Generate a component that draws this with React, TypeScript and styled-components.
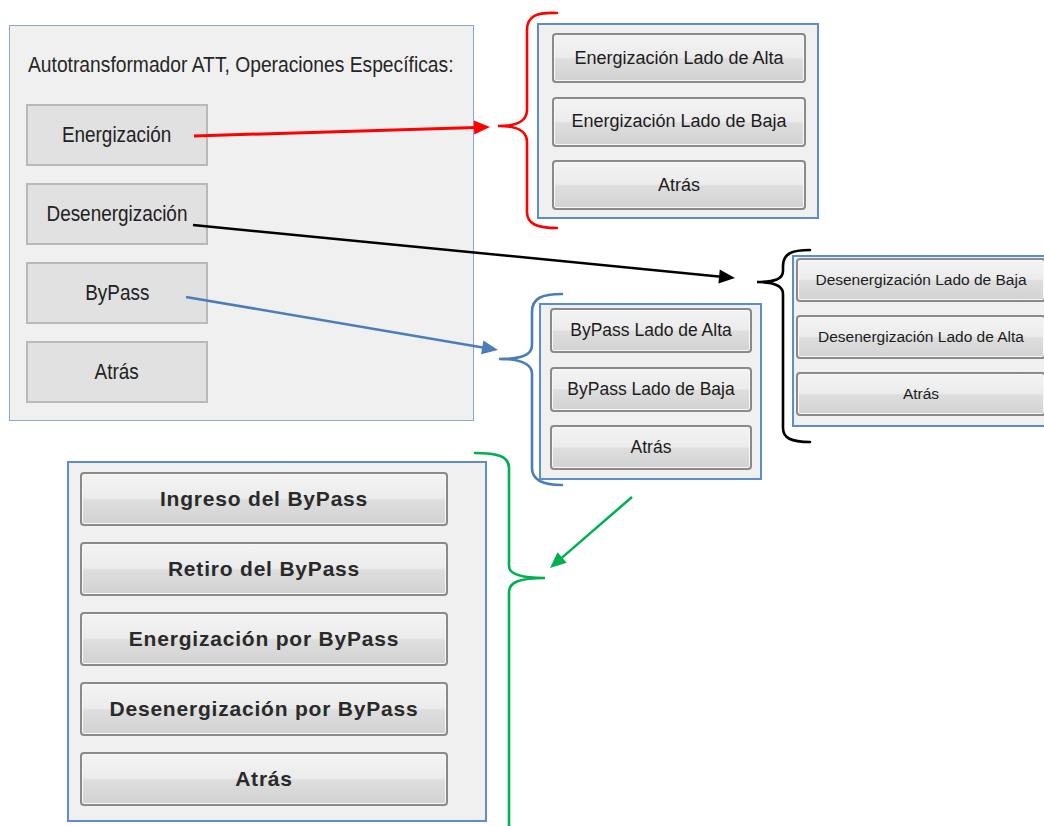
import React from 'react';
import styled, { createGlobalStyle } from 'styled-components';

const GlobalStyle = createGlobalStyle`
  html, body {
    margin: 0;
    padding: 0;
    background: #ffffff;
    overflow: hidden;
  }
`;

const Canvas = styled.div`
  position: relative;
  width: 1044px;
  height: 826px;
  overflow: hidden;
  background: #ffffff;
  font-family: 'Liberation Sans', Arial, sans-serif;
`;

// windows on the diagram canvas: their place is the content
const Window = styled.div<{ $x: number; $y: number; $w: number; $h: number }>`
  position: absolute;
  left: ${({ $x }) => $x}px;
  top: ${({ $y }) => $y}px;
  width: ${({ $w }) => $w}px;
  height: ${({ $h }) => $h}px;
  box-sizing: border-box;
  background: #f0f0f0;
  display: flex;
  flex-direction: column;
`;

const MainWindow = styled(Window)`
  border: 1px solid #8aa6cc;
  padding: 26px 0 0 16px;
`;

const SubWindow = styled(Window)<{ $pad: string; $gap: number }>`
  border: 2px solid #5f8dcb;
  padding: ${({ $pad }) => $pad};
  gap: ${({ $gap }) => $gap}px;
`;

// the old form uses a narrow face; no narrow font is installed, so squeeze it
const Narrow = styled.span<{ $origin?: string; $scale?: number }>`
  display: inline-block;
  white-space: nowrap;
  transform: scaleX(${({ $scale }) => $scale || 0.86});
  transform-origin: ${({ $origin }) => $origin || 'center'};
`;

const Title = styled.div`
  font-size: 22px;
  line-height: 26px;
  color: #262626;
  margin: 0 0 26px 2px;
  white-space: nowrap;
`;

const FlatList = styled.div`
  display: flex;
  flex-direction: column;
  gap: 17px;
`;

const FlatButton = styled.div`
  width: 182px;
  height: 62px;
  box-sizing: border-box;
  border: 2px solid #b9b9b9;
  background: #e1e1e1;
  display: flex;
  align-items: center;
  justify-content: center;
  font-size: 22px;
  color: #222222;
`;

const GlossButton = styled.div<{ $w: number; $h: number; $size: number; $bold?: boolean }>`
  flex: none;
  width: ${({ $w }) => $w}px;
  height: ${({ $h }) => $h}px;
  box-sizing: border-box;
  border: 2px solid #8a8a8a;
  border-radius: 4px;
  background: linear-gradient(#f3f3f3 0%, #ececec 48%, #dedede 52%, #d2d2d2 100%);
  box-shadow: inset 0 0 0 1px #f8f8f8;
  display: flex;
  align-items: center;
  justify-content: center;
  font-size: ${({ $size }) => $size}px;
  font-weight: ${({ $bold }) => ($bold ? 700 : 400)};
  letter-spacing: ${({ $bold }) => ($bold ? '0.8px' : 'normal')};
  color: ${({ $bold }) => ($bold ? '#2a2a2a' : '#1c1c1c')};
  white-space: nowrap;
`;

const Overlay = styled.svg`
  position: absolute;
  left: 0;
  top: 0;
  pointer-events: none;
`;

interface ArrowProps {
  x1: number;
  y1: number;
  x2: number;
  y2: number;
  color: string;
  width?: number;
}

const Arrow: React.FC<ArrowProps> = ({ x1, y1, x2, y2, color, width = 2.5 }) => {
  const len = 16;
  const half = 7;
  const d = Math.hypot(x2 - x1, y2 - y1);
  const ux = (x2 - x1) / d;
  const uy = (y2 - y1) / d;
  const bx = x2 - ux * len;
  const by = y2 - uy * len;
  const pts = `${x2},${y2} ${bx - uy * half},${by + ux * half} ${bx + uy * half},${by - ux * half}`;
  return (
    <g>
      <line x1={x1} y1={y1} x2={bx + ux * 2} y2={by + uy * 2} stroke={color} strokeWidth={width} />
      <polygon points={pts} fill={color} />
    </g>
  );
};

const brackets = [
  {
    color: '#ff0000',
    d: 'M557,13 C537,12 527,16 527,30 L527,110 C527,121 518,126 498,126 C518,126 527,131 527,142 L527,212 C527,224 537,228 557,228',
  },
  {
    color: '#000000',
    d: 'M810,250 C791,250 783,254 783,266 L783,271 C783,279 775,282 757,282 C775,282 783,286 783,294 L783,428 C783,438 791,442 810,442',
  },
  {
    color: '#4a7ebb',
    d: 'M562,294 C542,294 532,298 532,312 L532,345 C532,355 522,359 499,359 C522,359 532,364 532,374 L532,468 C532,480 542,485 562,485',
  },
  {
    color: '#00b050',
    d: 'M475,453 C497,453 509,456 509,468 L509,566 C509,574 520,578 545,578 C520,578 509,582 509,592 L509,830',
  },
];

const mainItems = ['Energización', 'Desenergización', 'ByPass', 'Atrás'];

const App: React.FC = () => {
  return (
    <>
      <GlobalStyle />
      <Canvas>
        <MainWindow $x={9} $y={25} $w={465} $h={396}>
          <Title>
            <Narrow $origin="left" $scale={0.875}>
              Autotransformador ATT, Operaciones Específicas:
            </Narrow>
          </Title>
          <FlatList>
            {mainItems.map((label) => (
              <FlatButton key={label}>
                <Narrow>{label}</Narrow>
              </FlatButton>
            ))}
          </FlatList>
        </MainWindow>

        <SubWindow $x={537} $y={23} $w={282} $h={196} $pad="8px 0 0 13px" $gap={13.5}>
          <GlossButton $w={254} $h={50} $size={18}>Energización Lado de Alta</GlossButton>
          <GlossButton $w={254} $h={50} $size={18}>Energización Lado de Baja</GlossButton>
          <GlossButton $w={254} $h={50} $size={18}>Atrás</GlossButton>
        </SubWindow>

        <SubWindow $x={792} $y={255} $w={262} $h={172} $pad="1px 0 0 2px" $gap={13}>
          <GlossButton $w={250} $h={44} $size={15.5}>Desenergización Lado de Baja</GlossButton>
          <GlossButton $w={250} $h={44} $size={15.5}>Desenergización Lado de Alta</GlossButton>
          <GlossButton $w={250} $h={44} $size={15.5}>Atrás</GlossButton>
        </SubWindow>

        <SubWindow $x={539} $y={303} $w={223} $h={177} $pad="3px 0 0 9px" $gap={13.5}>
          <GlossButton $w={202} $h={45} $size={17.5}>ByPass Lado de Alta</GlossButton>
          <GlossButton $w={202} $h={45} $size={17.5}>ByPass Lado de Baja</GlossButton>
          <GlossButton $w={202} $h={45} $size={17.5}>Atrás</GlossButton>
        </SubWindow>

        <SubWindow $x={67} $y={461} $w={420} $h={361} $pad="9px 0 0 11px" $gap={16}>
          <GlossButton $w={368} $h={54} $size={21} $bold>Ingreso del ByPass</GlossButton>
          <GlossButton $w={368} $h={54} $size={21} $bold>Retiro del ByPass</GlossButton>
          <GlossButton $w={368} $h={54} $size={21} $bold>Energización por ByPass</GlossButton>
          <GlossButton $w={368} $h={54} $size={21} $bold>Desenergización por ByPass</GlossButton>
          <GlossButton $w={368} $h={54} $size={21} $bold>Atrás</GlossButton>
        </SubWindow>

        <Overlay width={1044} height={826} viewBox="0 0 1044 826">
          {brackets.map((b) => (
            <path key={b.color} d={b.d} fill="none" stroke={b.color} strokeWidth={2.6} strokeLinecap="round" />
          ))}
          <Arrow x1={194} y1={136} x2={490} y2={127} color="#ff0000" width={3} />
          <Arrow x1={193} y1={225} x2={735} y2={278} color="#000000" />
          <Arrow x1={186} y1={297} x2={498} y2={350} color="#4a7ebb" />
          <Arrow x1={632} y1={497} x2={550} y2={568} color="#00b050" />
        </Overlay>
      </Canvas>
    </>
  );
};

export default App;
